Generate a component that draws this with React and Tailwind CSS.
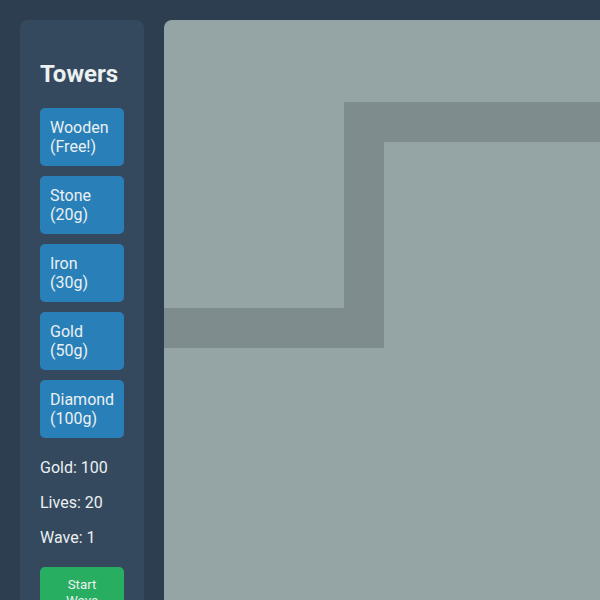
export default function App() {
  const towers = ["Wooden (Free!)", "Stone (20g)", "Iron (30g)", "Gold (50g)", "Diamond (100g)"];
  return (
    <div className="w-[600px] h-[600px] overflow-hidden bg-[#2c3e50] text-[#ecf0f1]" style={{ fontFamily: "Roboto, sans-serif" }}>
      <div className="flex items-start gap-5 p-5">
        <div className="w-[124px] shrink-0 bg-[#34495e] rounded-lg p-5">
          <h2 className="text-[24px] font-bold leading-[28px] mt-[20px] mb-[20px]">Towers</h2>
          <div className="flex flex-col gap-[10px]">
            {towers.map((t) => (
              <button key={t} className="block w-full text-left bg-[#2980b9] rounded-[5px] p-[10px] text-[16px] leading-[19px] text-[#ecf0f1]">
                {t}
              </button>
            ))}
          </div>
          <p className="text-[16px] leading-[19px] mt-[20px]">Gold: 100</p>
          <p className="text-[16px] leading-[19px] mt-[16px]">Lives: 20</p>
          <p className="text-[16px] leading-[19px] mt-[16px]">Wave: 1</p>
          <button className="block w-full mt-[20px] bg-[#27ae60] rounded-[5px] p-[10px] text-[13.33px] leading-[16px] text-[#ecf0f1] text-center">
            Start Wave
          </button>
        </div>
        <div className="shrink-0 w-[800px] h-[600px] bg-[#95a5a6] rounded-tl-lg overflow-hidden">
          <svg width="800" height="600" viewBox="0 0 800 600">
            <rect x="0" y="288" width="220" height="40" fill="#7f8c8d" />
            <rect x="180" y="82" width="40" height="246" fill="#7f8c8d" />
            <rect x="180" y="82" width="620" height="40" fill="#7f8c8d" />
          </svg>
        </div>
      </div>
    </div>
  );
}
